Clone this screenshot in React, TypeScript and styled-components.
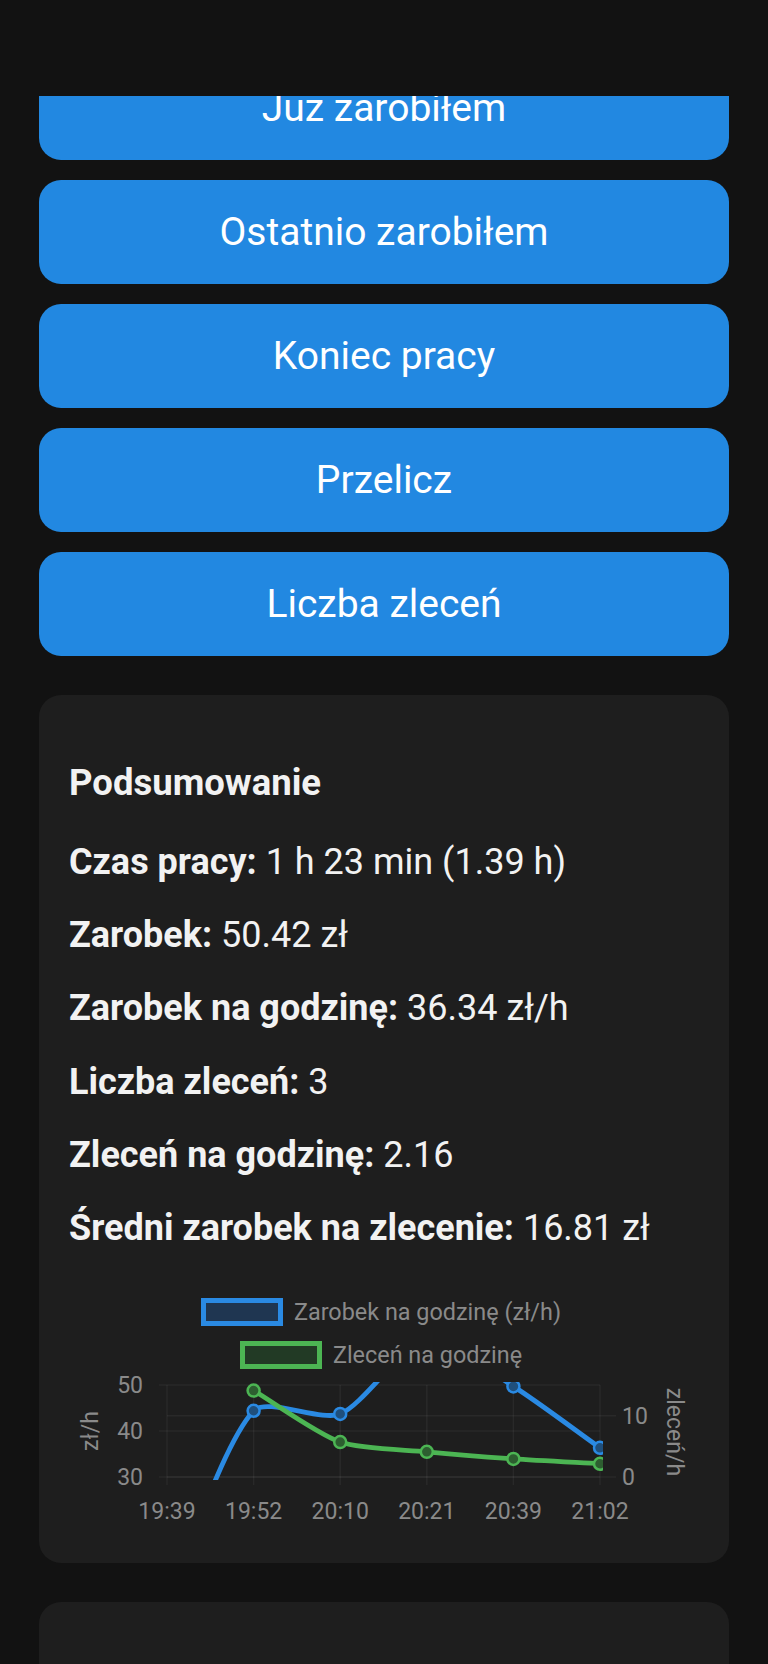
import React, { useLayoutEffect, useRef } from 'react';
import styled, { createGlobalStyle } from 'styled-components';

const GlobalStyle = createGlobalStyle`
  html, body {
    margin: 0;
    padding: 0;
    background: #121212;
  }
  body {
    font-family: Roboto, "Noto Sans", "Liberation Sans", sans-serif;
    color: #f2f2f2;
  }
`;

const Screen = styled.div`
  height: 1664px;
  display: flex;
  flex-direction: column;
  background: #121212;
`;

const TopBar = styled.div`
  height: 96px;
  flex-shrink: 0;
  background: #121212;
`;

const Scroller = styled.div`
  flex: 1;
  overflow-y: auto;
  scrollbar-width: none;

  &::-webkit-scrollbar {
    display: none;
  }
`;

const Content = styled.div`
  display: flex;
  flex-direction: column;
  gap: 39px;
  padding: 0 39px 40px;
`;

const ButtonList = styled.div`
  display: flex;
  flex-direction: column;
  gap: 20px;
`;

const ActionButton = styled.button`
  height: 104px;
  border: none;
  border-radius: 22px;
  background: #2288e1;
  color: #ffffff;
  font-family: inherit;
  font-size: 39px;
  cursor: pointer;
`;

const Card = styled.section<{ $minHeight?: number }>`
  background: #1e1e1e;
  border-radius: 22px;
  padding: 30px 30px 32px;
  min-height: ${(p) => (p.$minHeight ? `${p.$minHeight}px` : 'auto')};
`;

const Heading = styled.h2`
  margin: 37px 0 0;
  font-size: 36.5px;
  line-height: 42px;
  font-weight: 700;
`;

const StatList = styled.div`
  margin-top: 37px;
  display: flex;
  flex-direction: column;
  gap: 31.2px;
`;

const StatRow = styled.p`
  margin: 0;
  font-size: 36px;
  line-height: 42px;

  strong {
    font-weight: 700;
  }
`;

const ChartBox = styled.div`
  margin-top: 49px;
`;

const Legend = styled.div`
  display: flex;
  flex-direction: column;
  align-items: center;
  gap: 15px;
  padding-right: 6px;
`;

const LegendItem = styled.div`
  display: flex;
  align-items: center;
  gap: 11px;
  font-size: 23.4px;
  line-height: 28px;
  color: #8a8a8a;
`;

const Swatch = styled.span<{ $color: string; $fill: string }>`
  width: 82px;
  height: 28px;
  box-sizing: border-box;
  border: 5px solid ${(p) => p.$color};
  background: ${(p) => p.$fill};
`;

const Plot = styled.svg`
  display: block;
  margin-top: 4px;
  font-family: Roboto, "Noto Sans", sans-serif;
`;

const BLUE = '#2a8ae3';
const GREEN = '#4cb553';

type Pt = { x: number; y: number };

const area = { left: 98, right: 531, top: 12, bottom: 104 };
const xs = [98, 184.6, 271.2, 357.8, 444.4, 531];
const labels = ['19:39', '19:52', '20:10', '20:21', '20:39', '21:02'];
const earnings = [3, 44.4, 43.7, 60, 49.7, 36.34];
const orders: (number | null)[] = [null, 14.1, 5.7, 4.1, 2.95, 2.16];

const yLeft = (v: number) => area.bottom - (v - 30) * 4.6;
const yRight = (v: number) => area.bottom - v * (92 / 15);

// smoothed line through the points, like a chart line with tension
const splinePath = (pts: Pt[], t = 0.25) => {
  const cps = pts.map((cur, i) => {
    const prev = pts[i - 1] || cur;
    const next = pts[i + 1] || cur;
    const d01 = Math.hypot(cur.x - prev.x, cur.y - prev.y);
    const d12 = Math.hypot(next.x - cur.x, next.y - cur.y);
    const s01 = d01 / (d01 + d12) || 0;
    const s12 = d12 / (d01 + d12) || 0;
    const fa = t * s01;
    const fb = t * s12;
    return {
      before: { x: cur.x - fa * (next.x - prev.x), y: cur.y - fa * (next.y - prev.y) },
      after: { x: cur.x + fb * (next.x - prev.x), y: cur.y + fb * (next.y - prev.y) },
    };
  });
  let d = `M${pts[0].x},${pts[0].y}`;
  for (let i = 1; i < pts.length; i++) {
    const a = cps[i - 1].after;
    const b = cps[i].before;
    d += ` C${a.x},${a.y} ${b.x},${b.y} ${pts[i].x},${pts[i].y}`;
  }
  return d;
};

const bluePts: Pt[] = earnings.map((v, i) => ({ x: xs[i], y: yLeft(v) }));
const greenPts: Pt[] = orders
  .map((v, i) => (v === null ? null : { x: xs[i], y: yRight(v) }))
  .filter((p): p is Pt => p !== null);

const GRID = 'rgba(255,255,255,0.05)';

const Chart: React.FC = () => (
  <ChartBox>
    <Legend>
      <LegendItem>
        <Swatch $color={BLUE} $fill="#1f3651" />
        Zarobek na godzinę (zł/h)
      </LegendItem>
      <LegendItem>
        <Swatch $color={GREEN} $fill="#223a25" />
        Zleceń na godzinę
      </LegendItem>
    </Legend>
    <Plot width={630} height={158} viewBox="0 0 630 158">
      <defs>
        <clipPath id="plot-area">
          <rect x={area.left - 3} y={area.top - 3} width={area.right - area.left + 6} height={area.bottom - area.top + 6} />
        </clipPath>
      </defs>

      {xs.map((x) => (
        <line key={x} x1={x} x2={x} y1={area.top} y2={area.bottom + 8} stroke={GRID} strokeWidth={1.5} />
      ))}
      {[30, 40, 50].map((v) => (
        <line key={v} x1={area.left - 8} x2={area.right} y1={yLeft(v)} y2={yLeft(v)} stroke={GRID} strokeWidth={1.5} />
      ))}
      {[0, 10].map((v) => (
        <line key={v} x1={area.left} x2={area.right + 16} y1={yRight(v)} y2={yRight(v)} stroke={GRID} strokeWidth={1.5} />
      ))}

      <g fill="#8a8a8a" fontSize={23}>
        {[30, 40, 50].map((v) => (
          <text key={v} x={74} y={yLeft(v) + 8} textAnchor="end">
            {v}
          </text>
        ))}
        {[0, 10].map((v) => (
          <text key={v} x={553} y={yRight(v) + 8}>
            {v}
          </text>
        ))}
        {labels.map((l, i) => (
          <text key={l} x={xs[i]} y={146} textAnchor="middle">
            {l}
          </text>
        ))}
        <text transform="translate(21,58) rotate(-90)" y={8} textAnchor="middle">
          zł/h
        </text>
        <text transform="translate(606,59) rotate(90)" y={8} textAnchor="middle">
          zleceń/h
        </text>
      </g>

      <g clipPath="url(#plot-area)">
        <path d={splinePath(bluePts)} fill="none" stroke={BLUE} strokeWidth={4.8} strokeLinejoin="round" />
        <path d={splinePath(greenPts)} fill="none" stroke={GREEN} strokeWidth={4.8} strokeLinejoin="round" />
        {bluePts.map((p) => (
          <circle key={`b${p.x}`} cx={p.x} cy={p.y} r={6} fill="#1f4f7c" stroke={BLUE} strokeWidth={2.5} />
        ))}
        {greenPts.map((p) => (
          <circle key={`g${p.x}`} cx={p.x} cy={p.y} r={6} fill="#2d5e30" stroke={GREEN} strokeWidth={2.5} />
        ))}
      </g>
    </Plot>
  </ChartBox>
);

const stats: [string, string][] = [
  ['Czas pracy:', '1 h 23 min (1.39 h)'],
  ['Zarobek:', '50.42 zł'],
  ['Zarobek na godzinę:', '36.34 zł/h'],
  ['Liczba zleceń:', '3'],
  ['Zleceń na godzinę:', '2.16'],
  ['Średni zarobek na zlecenie:', '16.81 zł'],
];

const actions = ['Juz zarobiłem', 'Ostatnio zarobiłem', 'Koniec pracy', 'Przelicz', 'Liczba zleceń'];

const App: React.FC = () => {
  const scrollRef = useRef<HTMLDivElement>(null);

  useLayoutEffect(() => {
    if (scrollRef.current) scrollRef.current.scrollTop = 40;
  }, []);

  return (
    <>
      <GlobalStyle />
      <Screen>
        <TopBar />
        <Scroller ref={scrollRef}>
          <Content>
            <ButtonList>
              {actions.map((a) => (
                <ActionButton key={a}>{a}</ActionButton>
              ))}
            </ButtonList>
            <Card>
              <Heading>Podsumowanie</Heading>
              <StatList>
                {stats.map(([label, value]) => (
                  <StatRow key={label}>
                    <strong>{label}</strong> {value}
                  </StatRow>
                ))}
              </StatList>
              <Chart />
            </Card>
            <Card $minHeight={400} />
          </Content>
        </Scroller>
      </Screen>
    </>
  );
};

export default App;
